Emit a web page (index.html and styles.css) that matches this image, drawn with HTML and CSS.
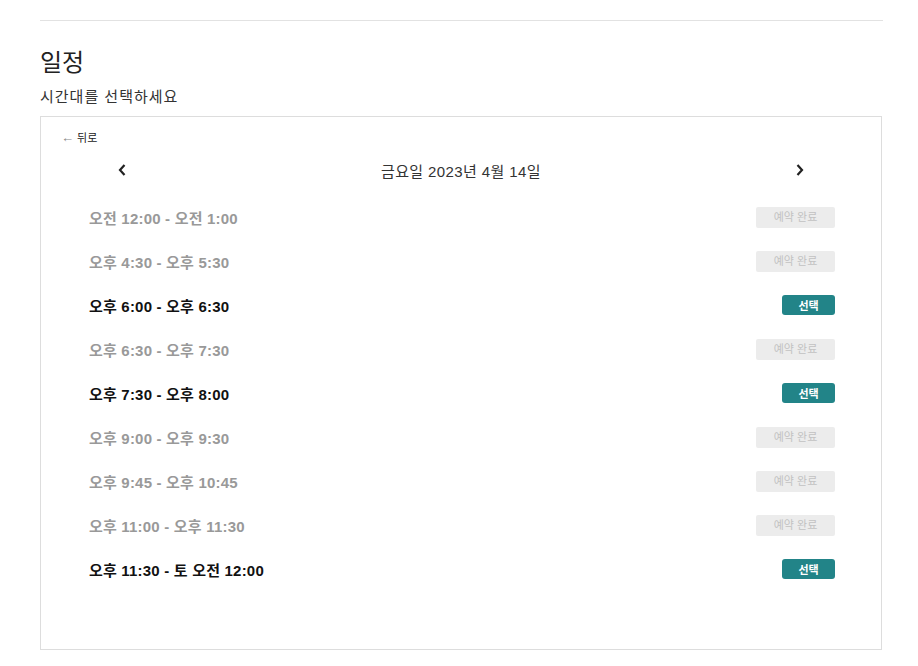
FILE: index.html
```html
<!DOCTYPE html>
<html lang="ko">
<head>
    <meta charset="UTF-8">
    <meta name="viewport" content="width=device-width, initial-scale=1.0">
    <title>일정</title>
    <link rel="stylesheet" href="styles.css">
</head>
<body>
    <div class="page">
        <h1 class="title">일정</h1>
        <p class="subtitle">시간대를 선택하세요</p>

        <div class="card">
            <a class="back" href="#"><span class="back-arrow">&larr;</span> 뒤로</a>

            <div class="date-nav">
                <button class="nav-btn" aria-label="이전">
                    <svg width="10" height="14" viewBox="0 0 10 14"><path d="M7.5 2 L3 7 L7.5 12" fill="none" stroke="#222" stroke-width="2.2"/></svg>
                </button>
                <div class="date-label">금요일 2023년 4월 14일</div>
                <button class="nav-btn" aria-label="다음">
                    <svg width="10" height="14" viewBox="0 0 10 14"><path d="M2.5 2 L7 7 L2.5 12" fill="none" stroke="#222" stroke-width="2.2"/></svg>
                </button>
            </div>

            <div class="slots">
                <div class="slot is-booked"><span class="slot-time">오전 12:00 - 오전 1:00</span><span class="btn-booked">예약 완료</span></div>
                <div class="slot is-booked"><span class="slot-time">오후 4:30 - 오후 5:30</span><span class="btn-booked">예약 완료</span></div>
                <div class="slot"><span class="slot-time">오후 6:00 - 오후 6:30</span><button class="btn-select">선택</button></div>
                <div class="slot is-booked"><span class="slot-time">오후 6:30 - 오후 7:30</span><span class="btn-booked">예약 완료</span></div>
                <div class="slot"><span class="slot-time">오후 7:30 - 오후 8:00</span><button class="btn-select">선택</button></div>
                <div class="slot is-booked"><span class="slot-time">오후 9:00 - 오후 9:30</span><span class="btn-booked">예약 완료</span></div>
                <div class="slot is-booked"><span class="slot-time">오후 9:45 - 오후 10:45</span><span class="btn-booked">예약 완료</span></div>
                <div class="slot is-booked"><span class="slot-time">오후 11:00 - 오후 11:30</span><span class="btn-booked">예약 완료</span></div>
                <div class="slot"><span class="slot-time">오후 11:30 - 토 오전 12:00</span><button class="btn-select">선택</button></div>
            </div>
        </div>
    </div>
</body>
</html>
```

FILE: styles.css
```css
body {
    margin: 0;
    font-family: "Liberation Sans", Arial, "Noto Sans CJK KR", sans-serif;
    color: #222;
    background: #fff;
}
.page {
    width: 843px;
    margin-left: 40px;
    margin-top: 20px;
    border-top: 1px solid #e2e2e2;
}
.title {
    margin: 27px 0 0;
    font-size: 24px;
    font-weight: normal;
    line-height: 30px;
}
.subtitle {
    margin: 9px 0 0;
    font-size: 15px;
    line-height: 20px;
    letter-spacing: 1px;
    color: #333;
}
.card {
    margin-top: 9px;
    width: 840px;
    height: 532px;
    border: 1px solid #ddd;
}
.back {
    display: inline-block;
    margin: 14px 0 0 20px;
    font-size: 11px;
    line-height: 14px;
    color: #222;
    text-decoration: none;
}
.back-arrow {
    color: #888;
    font-size: 13px;
}
.date-nav {
    display: flex;
    align-items: center;
    justify-content: space-between;
    margin: 11px 75px 0 75px;
    height: 26px;
}
.nav-btn {
    background: none;
    border: none;
    padding: 0;
    width: 12px;
    display: flex;
    align-items: center;
    justify-content: center;
}
.date-label {
    font-size: 15px;
    letter-spacing: 0.4px;
    color: #333;
}
.slots {
    margin-top: 12px;
    padding: 0 46px 0 48px;
}
.slot {
    display: flex;
    align-items: center;
    justify-content: space-between;
    height: 44px;
}
.slot-time {
    font-size: 15px;
    font-weight: bold;
    letter-spacing: 0.2px;
    color: #111;
}
.is-booked .slot-time {
    color: #999;
}
.btn-booked {
    width: 79px;
    height: 21px;
    line-height: 21px;
    text-align: center;
    font-size: 11px;
    color: #c2c2c2;
    background: #ececec;
    border-radius: 2px;
}
.btn-select {
    width: 53px;
    height: 20px;
    padding: 0;
    border: none;
    border-radius: 3px;
    background: #228488;
    color: #fff;
    font-family: inherit;
    font-size: 11px;
    font-weight: bold;
    cursor: pointer;
}
```
